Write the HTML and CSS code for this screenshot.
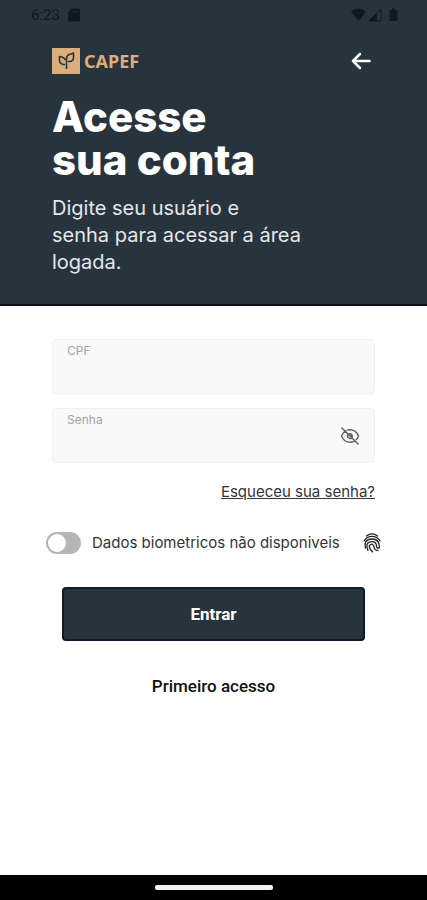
FILE: index.html
```html
<!DOCTYPE html>
<html lang="pt-BR">
<head>
<meta charset="utf-8">
<meta name="viewport" content="width=device-width, initial-scale=1">
<title>CAPEF</title>
<link rel="stylesheet" href="styles.css">
</head>
<body>
<header class="hero">
  <div class="status">
    <span class="time">6:23</span>
    <svg class="sim" width="12" height="14" viewBox="0 0 12 14"><path d="M4 0.5H11Q12 0.5 12 1.5V12.500Q12 13.500 11 13.500H1Q0 13.500 0 12.500V4.500Z" fill="currentColor"/><path d="M4 3V5M6.500 3V5M9 3V5" stroke="#28343d" stroke-width="0.700"/></svg>
    <svg class="signals" width="48" height="14" viewBox="0 0 48 14"><path d="M0 3.500Q7.500-2.500 15 3.500L7.500 13Z" fill="currentColor"/><path d="M30 1V13H18Z" fill="none" stroke="currentColor"/><path d="M26 5V13H18Z" fill="currentColor"/><path d="M41 0.500H44V2H46.500V13H38.500V2H41Z" fill="currentColor"/></svg>
  </div>
  <div class="brand-row">
    <div class="brand">
      <svg width="28" height="26" viewBox="0 0 28 26" fill="none"><path d="M0 0H28V26H0Z" fill="#dcae7c"/><path d="M14.500 21V11Q14.500 6.500 19 6L21.500 5V9.500Q21.500 13.500 17.500 13.500H16M13 16.500H11.500Q7.500 15.500 7.500 12.500V8.500Q12.500 9 13 12" stroke="#28343d" stroke-width="1.600" stroke-linejoin="round"/></svg>
      <span class="brand-name">CAPEF</span>
    </div>
    <button class="icon-button" type="button" aria-label="Voltar">
      <svg width="20" height="18" viewBox="0 0 20 18" fill="none" stroke="#fff" stroke-width="2.500" stroke-linecap="round" stroke-linejoin="round"><path d="M18.500 9H2M9 2L2 9L9 16"/></svg>
    </button>
  </div>
  <h1>Acesse<br>sua conta</h1>
  <p class="lead">Digite seu usuário e<br>senha para acessar a área<br>logada.</p>
</header>
<main>
  <form class="login">
    <div class="field">
      <label for="cpf">CPF</label>
      <input id="cpf" type="text" inputmode="numeric">
    </div>
    <div class="field">
      <label for="senha">Senha</label>
      <input id="senha" type="password">
      <button class="icon-button reveal" type="button" aria-label="Mostrar senha">
        <svg width="20" height="18" viewBox="0 0 22 20" fill="none" stroke="#606060" stroke-width="1.600" stroke-linecap="round"><path d="M6.500 4Q3 6 1.500 10Q4.500 17 11 17Q13.500 17 15.500 16M8.500 3.300Q17 1.500 20.500 10Q19.700 12.200 18 14M2 1L20 19M8 9Q8 12.500 12 13"/><path d="M10.500 7.500Q13.500 7.500 13.500 10.500Z" fill="#606060"/></svg>
      </button>
    </div>
    <a class="forgot" href="#recuperar">Esqueceu sua senha?</a>
    <div class="biometric">
      <input class="switch" id="biometria" type="checkbox" role="switch">
      <label for="biometria">Dados biometricos não disponiveis</label>
      <svg width="18" height="20" viewBox="0 0 18 20" fill="none" stroke="#222" stroke-width="1.300" stroke-linecap="round"><path d="M3.500 3Q9-1.200 14.500 3M1 8Q4 3.300 9 3.300T17 8M2.500 15Q0.500 6 9 6Q16.500 6 16.500 14.500M5 17.500Q1.500 8.700 9 8.700Q13.500 8.700 13.500 13.500Q13.700 15.500 16 15M9.500 18.800Q5.500 15 6.500 12.500Q9 9.500 10.800 13Q11 17.500 15 17.500"/></svg>
    </div>
    <button class="submit" type="submit">Entrar</button>
    <a class="first" href="#primeiro-acesso">Primeiro acesso</a>
  </form>
</main>
<footer class="nav-bar"><span class="handle"></span></footer>
</body>
</html>
```
FILE: styles.css
```css
* { box-sizing: border-box; }

body {
  margin: 0;
  min-height: 100vh;
  display: flex;
  flex-direction: column;
  background: #fff;
  color: #30363a;
  font-family: Inter, "Open Sans", sans-serif;
}

h1, p { margin: 0; }

.hero {
  padding: 0 52px 28px;
  background: #28343d;
  border-bottom: 2px solid #0a1118;
  color: #fff;
}

.status {
  display: flex;
  align-items: center;
  gap: 8px;
  height: 30px;
  margin: 0 -24px 0 -21px;
  color: #11191f;
  font: 15px/30px Roboto, sans-serif;
}

.signals { margin-left: auto; }

.brand-row {
  display: flex;
  justify-content: space-between;
  align-items: center;
  height: 62px;
  margin-bottom: 3px;
}

.brand {
  display: flex;
  align-items: center;
  gap: 4px;
}

.brand-name {
  color: #dcae7c;
  font: 700 18px/26px "Noto Sans", sans-serif;
}

.icon-button {
  display: flex;
  padding: 0;
  border: 0;
  background: none;
  cursor: pointer;
}

.brand-row .icon-button { margin-right: 4px; }

h1 {
  font-size: 42px;
  line-height: 43px;
  font-weight: 800;
}

.lead {
  margin-top: 14px;
  color: #e4e7e9;
  font-size: 20px;
  line-height: 27px;
}

main { flex: 1; }

.login {
  display: flex;
  flex-direction: column;
  gap: 14px;
  padding: 33px 52px 0;
}

.field {
  display: flex;
  align-items: center;
  position: relative;
  height: 55px;
  border: 1px solid #f0f0f0;
  border-radius: 4px;
  background: #f9f9f9;
}

.field label {
  position: absolute;
  top: 3px;
  left: 14px;
  color: #a3a3a3;
  font-size: 12px;
  line-height: 16px;
}

.field input {
  flex: 1;
  min-width: 0;
  height: 100%;
  padding: 16px 14px 0;
  border: 0;
  background: transparent;
  font: inherit;
}

.reveal { margin-right: 14px; }

.forgot {
  align-self: flex-end;
  margin-top: 4px;
  color: #30363a;
  font-size: 15px;
  line-height: 22px;
}

.biometric {
  display: flex;
  align-items: center;
  gap: 11px;
  margin: 15px -6px 0;
  font-size: 15px;
  line-height: 22px;
}

.biometric svg { margin-left: auto; }

.switch {
  appearance: none;
  width: 35px;
  height: 22px;
  margin: 0;
  padding: 2px;
  border-radius: 11px;
  background: #b5b5b7;
}

.switch::before {
  content: "";
  display: block;
  width: 18px;
  height: 18px;
  border-radius: 50%;
  background: #fff;
}

.switch:checked::before { margin-left: auto; }

.submit {
  height: 54px;
  margin: 19px 10px 0;
  border: 2px solid #101b27;
  border-radius: 4px;
  background: #28343d;
  color: #fff;
  font: 700 17px/24px Roboto, sans-serif;
}

.first {
  align-self: center;
  margin-top: 19px;
  color: #111;
  font: 500 17px/24px Roboto, sans-serif;
  text-decoration: none;
}

.nav-bar {
  display: flex;
  justify-content: center;
  align-items: center;
  height: 25px;
  background: #000;
}

.handle {
  width: 118px;
  height: 5px;
  border-radius: 2px;
  background: #f2f2f2;
}
```
